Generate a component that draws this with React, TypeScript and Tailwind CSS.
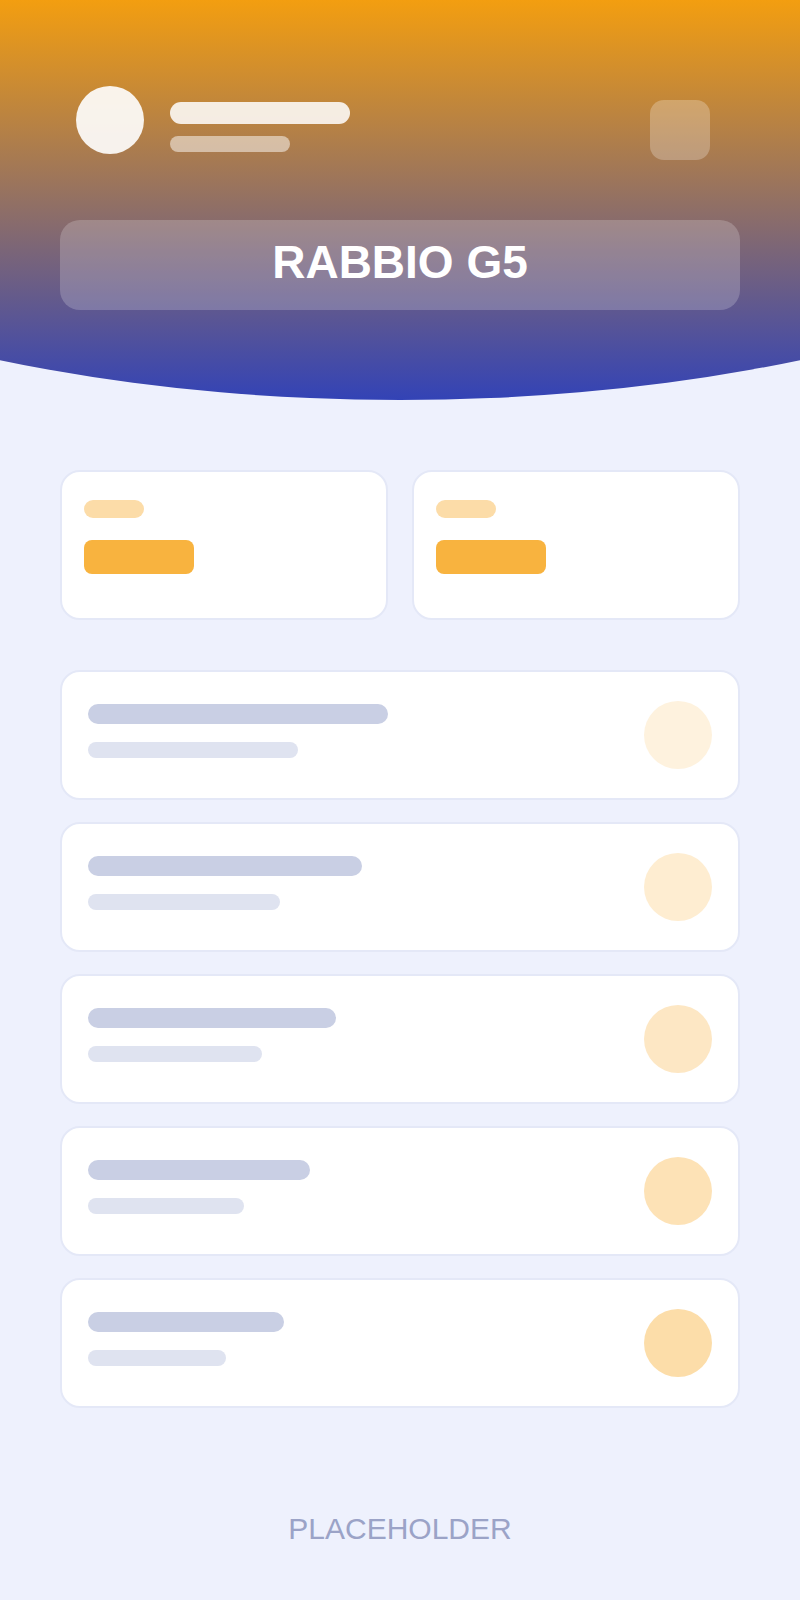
export default function App() {
	const rows = [
		{ top: "w-[300px]", sub: "w-[210px]", dot: "bg-[#fef2de]" },
		{ top: "w-[274px]", sub: "w-[192px]", dot: "bg-[#feedd1]" },
		{ top: "w-[248px]", sub: "w-[174px]", dot: "bg-[#fde7c4]" },
		{ top: "w-[222px]", sub: "w-[156px]", dot: "bg-[#fde2b6]" },
		{ top: "w-[196px]", sub: "w-[138px]", dot: "bg-[#fcdda9]" },
	];

	return (
		<div className="min-h-[1600px] bg-[#eef1fd] font-['Liberation_Sans',Arial,sans-serif]">
			{/* header */}
			<header className="h-[400px] bg-[linear-gradient(to_bottom,#f39e10,#3343b6)] px-[60px] pt-[86px] [clip-path:ellipse(115%_100%_at_50%_0%)]">
				<div className="flex items-start pl-4 pr-[30px]">
					<div className="h-[68px] w-[68px] rounded-full bg-white/90" />
					<div className="ml-[26px] mt-4 flex flex-col gap-3">
						<div className="h-[22px] w-[180px] rounded-full bg-white/85" />
						<div className="h-4 w-[120px] rounded-full bg-white/50" />
					</div>
					<div className="ml-auto mt-[14px] h-[60px] w-[60px] rounded-[14px] bg-white/25" />
				</div>
				<div className="mt-[60px] flex h-[90px] items-center justify-center rounded-[20px] bg-white/20 pb-1.5">
					<span className="text-[46px] leading-none font-bold text-white">
						RABBIO G5
					</span>
				</div>
			</header>

			<main className="px-[60px]">
				{/* stat cards */}
				<div className="mt-[70px] grid grid-cols-2 gap-6">
					{[0, 1].map((i) => (
						<div
							key={i}
							className="h-[150px] rounded-[20px] border-2 border-[#e4e8f7] bg-white px-[22px] pt-[28px]"
						>
							<div className="h-[18px] w-[60px] rounded-full bg-[#fcdca8]" />
							<div className="mt-[22px] h-[34px] w-[110px] rounded-lg bg-[#f8b33f]" />
						</div>
					))}
				</div>

				{/* list */}
				<div className="mt-[50px] flex flex-col gap-[22px]">
					{rows.map((row, i) => (
						<div
							key={i}
							className="flex h-[130px] items-center justify-between rounded-[20px] border-2 border-[#e4e8f7] bg-white px-[26px]"
						>
							<div className="flex flex-col gap-[18px] self-start pt-[32px]">
								<div className={`h-5 rounded-full bg-[#c9cfe4] ${row.top}`} />
								<div className={`h-4 rounded-full bg-[#dfe3f0] ${row.sub}`} />
							</div>
							<div className={`h-[68px] w-[68px] rounded-full ${row.dot}`} />
						</div>
					))}
				</div>

				<p className="mt-[104px] pb-12 text-center text-[30px] leading-[34px] text-[#9ba3c7]">
					PLACEHOLDER
				</p>
			</main>
		</div>
	);
}
